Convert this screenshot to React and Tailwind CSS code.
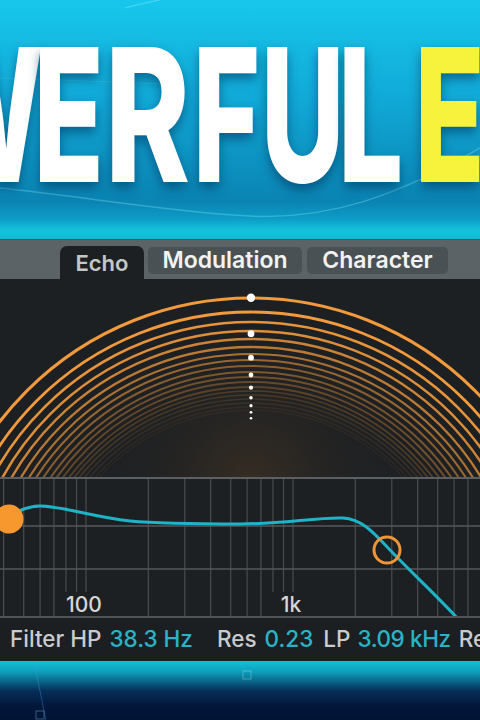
import React from 'react';

// echo rings: radius, opacity, stroke width
const rings = [
  [317, 1, 3], [303, 1, 2.8], [293, 0.95, 2.6], [284, 0.9, 2.5], [276, 0.82, 2.4],
  [268, 0.74, 2.3], [261, 0.66, 2.2], [255, 0.58, 2.1], [249, 0.5, 2], [243, 0.44, 2],
  [238, 0.38, 1.9], [233, 0.32, 1.8], [228, 0.27, 1.8], [224, 0.22, 1.7], [220, 0.18, 1.6],
  [216, 0.14, 1.5], [212, 0.11, 1.5], [208, 0.08, 1.4], [205, 0.06, 1.4],
];

const taps = [
  [297.7, 4.2], [333.7, 3.4], [357.7, 2.9], [375, 2.4], [387.7, 2.1],
  [397.7, 1.8], [405.7, 1.6], [412.3, 1.4], [418.3, 1.3],
];

const freqs = [40, 50, 60, 70, 80, 90, 100, 200, 300, 400, 500, 600, 700, 800, 900, 1000, 2000, 3000, 4000, 5000, 6000, 7000];
const shortLines = [80, 90, 100, 800, 900, 1000];
const freqX = (f) => 86 + 207 * Math.log10(f / 100);

const title = [
  { ch: 'W', w: 78, ml: -14, sx: 'scale-x-[0.62]' },
  { ch: 'E', w: 73, ml: 11, sx: 'scale-x-[0.62]' },
  { ch: 'R', w: 70, ml: 8, sx: 'scale-x-[0.69]' },
  { ch: 'F', w: 76, ml: 5, sx: 'scale-x-[0.62]' },
  { ch: 'U', w: 74, ml: 2, sx: 'scale-x-[0.62]' },
  { ch: 'L', w: 61, ml: 0, sx: 'scale-x-[0.62]' },
  { ch: 'E', w: 130, ml: -16, sx: 'scale-x-[0.62]', yellow: true },
];

function EchoRings() {
  const cx = 251;
  const cy = 336;
  return (
    <svg width="480" height="198" viewBox="0 0 480 198" className="block">
      <defs>
        <radialGradient id="glow" cx="251" cy="205" r="170" gradientUnits="userSpaceOnUse">
          <stop offset="0" stopColor="#4e3923" stopOpacity="0.55" />
          <stop offset="1" stopColor="#1d2023" stopOpacity="0" />
        </radialGradient>
      </defs>
      <rect width="480" height="198" fill="url(#glow)" />
      {rings.map(([r, o, sw], i) => (
        <circle key={i} cx={cx} cy={cy} r={r} fill="none" stroke="#f29a3c" strokeOpacity={o} strokeWidth={sw} />
      ))}
      {taps.map(([y, r], i) => (
        <circle key={i} cx={cx} cy={y - 279} r={r} fill="#ffffff" />
      ))}
    </svg>
  );
}

function FilterGraph() {
  return (
    <svg width="480" height="137" viewBox="0 0 480 137" className="block">
      {freqs.map((f) => {
        const x = freqX(f);
        return (
          <line key={f} x1={x} x2={x} y1="0" y2={shortLines.includes(f) ? 113 : 137} stroke="#484c50" strokeWidth="1.2" />
        );
      })}
      <line x1="0" x2="480" y1="47" y2="47" stroke="#55595d" strokeWidth="1.4" />
      <line x1="0" x2="480" y1="90" y2="90" stroke="#55595d" strokeWidth="1.4" />
      <text x="84" y="133" textAnchor="middle" fontSize="21" fontWeight="500" fill="#d6d6d6" fontFamily="Inter, sans-serif">100</text>
      <text x="291" y="133" textAnchor="middle" fontSize="21" fontWeight="500" fill="#d6d6d6" fontFamily="Inter, sans-serif">1k</text>
      <path
        d="M0,44 C10,36 24,27 40,27 C62,27 92,38 130,42 C162,45 200,45 240,45 C282,45 318,38 343,39 C362,40 374,54 390,71 C414,96 440,120 458,140"
        fill="none"
        stroke="#1db4c8"
        strokeWidth="3"
      />
      <circle cx="9" cy="40" r="14.5" fill="#f7982f" />
      <circle cx="387" cy="71" r="13" fill="none" stroke="#ef9538" strokeWidth="3" />
    </svg>
  );
}

export default function App() {
  return (
    <div className="w-[480px] h-[720px] overflow-hidden flex flex-col bg-[#1d2023] font-['Inter','Liberation_Sans',sans-serif]">
      {/* Title */}
      <div className="relative h-[240px] shrink-0 overflow-hidden bg-[linear-gradient(180deg,#17c7eb_0%,#11aad8_40%,#0a84b3_84%,#0c9bc6_91%,#15c3dd_96%,#10b8d2_100%)]">
        <svg width="480" height="240" className="absolute inset-0" viewBox="0 0 480 240">
          <path d="M0,188 C80,196 170,212 250,216 C330,220 400,195 480,148" fill="none" stroke="#7fe3f5" strokeOpacity="0.35" strokeWidth="1.5" />
          <path d="M125,8 C140,4 150,2 160,0" fill="none" stroke="#9beefa" strokeOpacity="0.4" strokeWidth="1.2" />
          <path d="M0,78 C60,80 120,82 170,84" fill="none" stroke="#7fe3f5" strokeOpacity="0.18" strokeWidth="1.2" />
        </svg>
        <div className="relative flex pt-[22px] -ml-[43px] whitespace-nowrap">
          {title.map((l, i) => (
            <div key={i} className="flex justify-center shrink-0" style={{ width: l.w, marginLeft: l.ml }}>
              <span
                className={`inline-block text-[186px] leading-none font-extrabold [text-shadow:0_6px_14px_rgba(0,45,85,0.55)] ${l.sx} ${l.yellow ? 'text-[#f7f23c]' : 'text-white'}`}
              >
                {l.ch}
              </span>
            </div>
          ))}
        </div>
        <div className="absolute bottom-0 left-0 right-0 h-[1px] bg-[#0a6f80]" />
      </div>

      {/* Tabs */}
      <div className="h-[39px] shrink-0 bg-[#5c6366] flex items-end text-[23px] font-semibold leading-none">
        <div className="w-[60px]" />
        <div className="w-[84px] h-[33px] bg-[#1d2023] rounded-t-[7px] flex items-center justify-center text-[22px] text-[#c3c7c8]">
          Echo
        </div>
        <div className="ml-[4px] self-start mt-[7px] w-[154px] h-[27px] bg-[#4a5154] rounded-[5px] flex items-center justify-center text-[#f2f2f2]">
          Modulation
        </div>
        <div className="ml-[5px] self-start mt-[7px] w-[141px] h-[27px] bg-[#4a5154] rounded-[5px] flex items-center justify-center text-[#f2f2f2]">
          Character
        </div>
      </div>

      {/* Echo rings */}
      <EchoRings />
      <div className="h-[2px] shrink-0 bg-[#5b6064]" />

      {/* Filter graph */}
      <FilterGraph />
      <div className="h-[2px] shrink-0 bg-[#4f5458]" />

      {/* Parameters */}
      <div className="h-[43px] shrink-0 flex items-center text-[22.5px] leading-none font-medium whitespace-nowrap bg-[#1c1f22]">
        <span className="w-[4px] h-[18px] bg-[#1fb5c8]" />
        <span className="ml-[10px] text-[#c9cbcc]">Filter HP</span>
        <span className="ml-[8px] text-[#2ab3c6]">38.3 Hz</span>
        <span className="ml-[24px] text-[#c9cbcc]">Res</span>
        <span className="ml-[8px] text-[#2ab3c6]">0.23</span>
        <span className="ml-[10px] text-[#c9cbcc]">LP</span>
        <span className="ml-[7px] text-[#2ab3c6] tracking-[-0.4px]">3.09 kHz</span>
        <span className="ml-[8px] text-[#c9cbcc]">Re</span>
      </div>

      {/* Background below */}
      <div className="relative flex-1 bg-[linear-gradient(180deg,#13c2d8_0%,#0e9fbc_18%,#06305a_50%,#03173b_75%,#021436_100%)]">
        <svg width="480" height="60" className="absolute inset-0" viewBox="0 0 480 60">
          <path d="M34,0 L46,60" stroke="#4aa6d6" strokeOpacity="0.35" strokeWidth="1" />
          <rect x="36" y="50" width="8" height="8" fill="none" stroke="#6fb3d8" strokeOpacity="0.45" strokeWidth="1" />
          <rect x="243" y="10" width="8" height="8" fill="none" stroke="#bfeaf4" strokeOpacity="0.35" strokeWidth="1" />
        </svg>
      </div>
    </div>
  );
}
